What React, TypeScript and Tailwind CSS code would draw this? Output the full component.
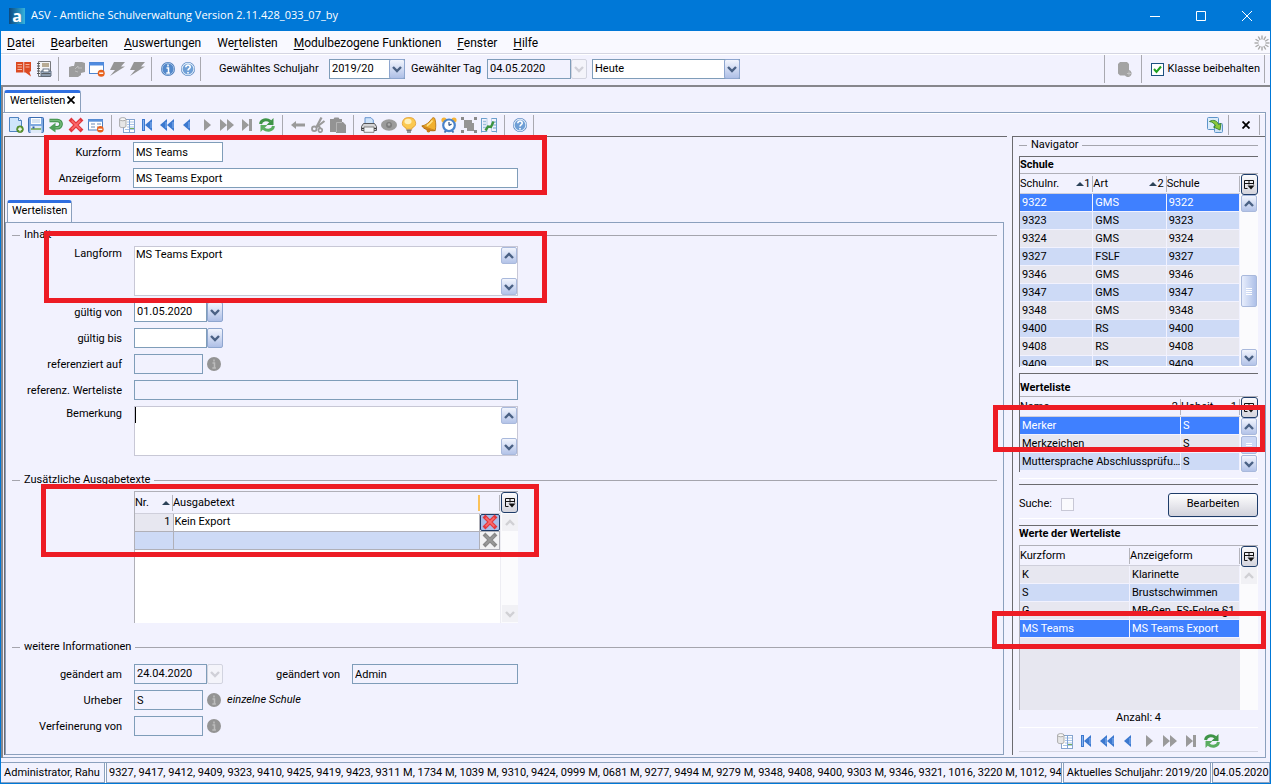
import React from "react";

/* ---------- icons ---------- */

type IconProps = { children: React.ReactNode; box?: string };

function Svg({ children, box = "0 0 16 16" }: IconProps) {
  return (
    <svg viewBox={box} className="block size-4 shrink-0" aria-hidden="true">
      {children}
    </svg>
  );
}

const BLUE = "#3b78cf";
const GREY = "#9a9a9a";

const NewIcon = () => (
  <Svg>
    <path d="M1.5.5h9l3 3v11h-12z" fill="#cfe5fb" stroke="#4f83bf" />
    <path d="M10.5.5v3h3" fill="#fff" stroke="#4f83bf" />
    <circle cx="12" cy="12.2" r="3.4" fill="#5f9a35" stroke="#3f7a20" strokeWidth=".6" />
    <path d="M12 10.2v4M10 12.2h4" stroke="#fff" strokeWidth="1.3" />
  </Svg>
);
const SaveIcon = () => (
  <Svg>
    <rect x=".5" y=".5" width="15" height="15" rx="1" fill="#7fa9e0" stroke="#3a6cb0" />
    <rect x="3" y="1" width="10" height="6" fill="#fff" />
    <path d="M4 3h8M4 5h8" stroke="#9fbbe0" strokeWidth=".8" />
    <rect x="2.5" y="9" width="11" height="7" fill="#dfeaf8" />
    <path d="M3 12h10" stroke="#76a84f" strokeWidth="1.6" />
    <rect x="4.5" y="9.5" width="2" height="2" fill="#2f5ea8" />
  </Svg>
);
const UndoIcon = () => (
  <Svg>
    <path d="M1.500 3.500h8a3.600 3.600 0 0 1 0 7.200H6" fill="none" stroke="#3e8f49" strokeWidth="3.600" />
    <path d="M2 3.500h7.500a3.600 3.600 0 0 1 0 7.200H6" fill="none" stroke="#74b97a" strokeWidth="1.600" />
    <path d="M7.500 5.800v9.600L1 10.700z" fill="#4f9f59" />
  </Svg>
);
const DeleteIcon = ({ grey = false }: { grey?: boolean }) => (
  <Svg>
    <path d="M3.400 3.400l9.200 9.200M12.600 3.400l-9.200 9.200" stroke={grey ? "#8a8a8a" : "#e2373d"} strokeWidth="4" strokeLinecap="square" />
    <path d="M3.600 3.600l8.800 8.800M12.400 3.600l-8.800 8.800" stroke={grey ? "#999" : "#fb6a6a"} strokeWidth="1.600" />
  </Svg>
);
const FormMinusIcon = () => (
  <Svg>
    <rect x=".5" y="2.500" width="14" height="10.500" fill="#fff" stroke="#4f7fbf" />
    <path d="M0 3.500h15" stroke="#5b92dc" strokeWidth="2.400" />
    <path d="M3 7h4M3 10h4M9 7h4M9 10h1" stroke="#6c8cb8" strokeWidth="1.200" />
    <circle cx="12.300" cy="12.300" r="3.300" fill="#e8601c" />
    <path d="M10.300 12.300h4" stroke="#fff" strokeWidth="1.300" />
  </Svg>
);
const WindowMinusIcon = () => (
  <Svg>
    <rect x=".5" y="1.500" width="14" height="11" fill="#fff" stroke="#4f86cf" />
    <path d="M0 3h15" stroke="#4f8be0" strokeWidth="3" />
    <circle cx="12.200" cy="12.200" r="3.500" fill="#e8601c" />
    <path d="M10.200 12.200h4" stroke="#fff" strokeWidth="1.400" />
  </Svg>
);
const TableIcon = () => (
  <Svg>
    <rect x="4.500" y="2.500" width="11" height="13" fill="#fff" stroke="#86a5cf" />
    <path d="M8 5h7M8 7.500h7M8 10h7M6 12.500h9" stroke="#a9c4e8" />
    <path d="M10.500 3v12" stroke="#7fa3d6" />
    <path d="M11 11.500h4" stroke="#74b05a" />
    <path d="M.600 2.200v7c0 1.900 6.400 1.900 6.400 0v-7z" fill="#e6e6e6" stroke="#9a9a9a" strokeWidth=".8" />
    <ellipse cx="3.800" cy="2.200" rx="3.200" ry="1.600" fill="#f8f8f8" stroke="#9a9a9a" strokeWidth=".8" />
  </Svg>
);
const FirstIcon = () => (
  <Svg>
    <path d="M3 2h3v12H3zM13 2v12L6 8z" fill={BLUE} />
    <path d="M4.500 3v10M12 5v6" stroke="#86b2f0" />
  </Svg>
);
const FastBackIcon = () => (
  <Svg>
    <path d="M8 2v12L1 8zM15 2v12L8 8z" fill={BLUE} />
    <path d="M7 5v6M14 5v6" stroke="#86b2f0" />
  </Svg>
);
const BackIcon = () => (
  <Svg>
    <path d="M11 2v12L4 8z" fill={BLUE} />
    <path d="M10 5v6" stroke="#86b2f0" />
  </Svg>
);
const NextIcon = () => (
  <Svg>
    <path d="M5 2v12l7-6z" fill={GREY} />
  </Svg>
);
const FastNextIcon = () => (
  <Svg>
    <path d="M1 2v12l7-6zM8 2v12l7-6z" fill={GREY} />
  </Svg>
);
const LastIcon = () => (
  <Svg>
    <path d="M3 2v12l7-6zM10 2h3v12h-3z" fill={GREY} />
  </Svg>
);
const RefreshIcon = () => (
  <Svg>
    <path d="M1.500 7c.8-4.500 6-5.500 10-2.600" fill="none" stroke="#3f9447" strokeWidth="3" />
    <path d="M14.500 1v7H7.500z" fill="#3f9447" />
    <path d="M14.500 9c-.8 4.500-6 5.500-10 2.600" fill="none" stroke="#5aad60" strokeWidth="3" />
    <path d="M1.500 15V8h7z" fill="#5aad60" />
  </Svg>
);
const ArrowLeftIcon = () => (
  <Svg>
    <path d="M1 8l5-4v2.400h9v3.200H6V12z" fill={GREY} />
  </Svg>
);
const ScissorsIcon = () => (
  <Svg>
    <path d="M11.500.500L6.500 10" stroke={GREY} strokeWidth="2.200" />
    <path d="M14.500 4L6 10.500M8.500 8.500l1.800 3" stroke={GREY} strokeWidth="2.200" />
    <circle cx="4.300" cy="11.800" r="2.300" fill="none" stroke={GREY} strokeWidth="1.800" />
    <circle cx="10.300" cy="13.300" r="1.900" fill="none" stroke={GREY} strokeWidth="1.700" />
  </Svg>
);
const PasteIcon = () => (
  <Svg>
    <path d="M0 2h3.500L4.500.500h4L9.500 2H12v3h1l3 3v8H6v-1H0z" fill="#939393" />
    <path d="M6.500 15V5.500H12" fill="none" stroke="#b4b4b4" />
  </Svg>
);
const PrintIcon = () => (
  <Svg>
    <path d="M4 7V.700h6L12.300 3v4" fill="#cfe4fb" stroke="#5a8bc8" strokeWidth=".9" />
    <path d="M2.500 6.500h11l2 3v4h-15v-4z" fill="#d4d4d6" stroke="#55565a" />
    <path d="M1 11.500h14" stroke="#333" strokeWidth="1.200" />
    <path d="M3 10h10v5.300H3z" fill="#f3f5f9" stroke="#666" strokeWidth=".8" />
  </Svg>
);
const EyeIcon = () => (
  <Svg>
    <ellipse cx="8" cy="8" rx="8" ry="5.800" fill="#9b9b9b" />
    <circle cx="8" cy="8" r="3" fill="#7d7d7d" />
    <circle cx="8" cy="7.500" r="1.300" fill="#b0b0b0" />
  </Svg>
);
const BulbIcon = () => (
  <Svg>
    <path d="M8 .600a6.200 5.400 0 0 1 3 10.300v1.300H5v-1.300A6.200 5.400 0 0 1 8 .600z" fill="#fbc951" stroke="#df9c2e" strokeWidth=".8" />
    <ellipse cx="7" cy="4.500" rx="3.500" ry="2.800" fill="#fff0ba" />
    <path d="M5.500 13.200h5M6 15h4" stroke="#777" strokeWidth="1.600" />
  </Svg>
);
const BellIcon = () => (
  <Svg>
    <path d="M11 1.500c1-1.500 3-.8 3 .8 1 4 1 7.500.2 11.300L1 9C5.500 8 8.500 5 11 1.500z" fill="#f1b02e" stroke="#b77614" strokeWidth=".9" />
    <path d="M.8 8.800c1 2.800 8 5.800 13.400 4.800" fill="#d7881b" stroke="#a96a10" strokeWidth=".9" />
    <circle cx="7.500" cy="13.600" r="1.900" fill="#c97b16" />
    <path d="M11.500 3.500c-1.500 2-3 4-5.500 5.200" stroke="#ffe48f" strokeWidth="1.500" fill="none" />
  </Svg>
);
const AlarmIcon = () => (
  <Svg>
    <circle cx="3" cy="3" r="2.600" fill="#f5b335" />
    <circle cx="13" cy="3" r="2.600" fill="#f5b335" />
    <path d="M3.500 15.500l2-2.500M12.500 15.500l-2-2.500" stroke="#4772ad" strokeWidth="1.800" />
    <circle cx="8" cy="8.300" r="5.800" fill="#fff" stroke="#4a83ca" strokeWidth="2.200" />
    <path d="M8 8.500V5M8 8.500l2.600-1.600" stroke="#2e5185" strokeWidth="1.200" />
  </Svg>
);
const GroupIcon = () => (
  <Svg>
    <path d="M3 3h8v3h2v8H6v-3H3z" fill="#949494" />
    <path d="M0 0h3v3H0zM13 0h3v3h-3zM0 13h3v3H0zM13 13h3v3h-3z" fill="#8a8a8a" />
  </Svg>
);
const CompareIcon = () => (
  <Svg>
    <path d="M.500 1v14.500M.500 1.500H6M15.500 1v14.500M10 1.500h6M1 14.500h5M11 14.500h5" fill="none" stroke="#6da0cc" />
    <path d="M2 4.500h3M2 7.500h3M2 10.500h3M12 5h3M12 8h3M12 11h3" stroke="#9cc0dc" strokeWidth="1.400" />
    <path d="M6 1v14M10.500 1v14" stroke="#a8c8e4" strokeWidth=".8" />
    <path d="M4.500 13.500l2.500-4 3 .5L12.500 4.500" stroke="#3c9440" strokeWidth="2.400" fill="none" />
  </Svg>
);
const RoundIcon = ({ sign, tone = "blue" }: { sign: "i" | "?"; tone?: "blue" | "grey" }) => (
  <Svg>
    <circle cx="8" cy="8" r="7" fill={tone === "blue" ? "#4678b8" : "#949494"} />
    {tone === "blue" && <circle cx="8" cy="8" r="5.900" fill={sign === "i" ? "#5288cb" : "#6f9fd6"} stroke="#dbe9f8" strokeWidth={sign === "?" ? 1.200 : 0.600} />}
    {sign === "i" ? (
      <path d="M8 3.500v2M6.500 7H8.500v4.500M6.300 12h3.600" stroke={tone === "blue" ? "#fff" : "#bcbcbc"} strokeWidth="1.500" fill="none" />
    ) : (
      <path d="M5.800 6.200c0-3 4.600-2.700 4.400 0C10.100 7.800 8 7.700 8 9.600M8 10.900v1.600" stroke="#fff" strokeWidth="1.600" fill="none" />
    )}
  </Svg>
);
const BookIcon = () => (
  <Svg>
    <path d="M0 1h7.400v10.500H0zM8.200 1H15v9l-1.500 1 1.500 4.500-5.500-4H8.200z" fill="#dc4a22" />
    <path d="M1.500 3.500h4.500M1.500 6h4.500M1.500 8.500h4.500M9.500 3.500h4M9.500 6h4" stroke="#f6b59f" />
  </Svg>
);
const ReportIcon = () => (
  <Svg>
    <path d="M2.500.500h12v15h-12z" fill="#f4f4f6" stroke="#77787c" />
    <path d="M1 2.500h3M1 5h3M1 7.500h3M1 10h3M1 12.500h3" stroke="#555" />
    <rect x="6" y="2" width="7" height="4" fill="#b8ab94" />
    <path d="M5 10h10v5H5z" fill="#b6c5d8" stroke="#475569" strokeWidth=".8" />
    <rect x="7" y="8" width="6" height="3" fill="#fff" stroke="#475569" strokeWidth=".8" />
    <path d="M5.500 12.800h9" stroke="#333" />
  </Svg>
);
const WindowsIcon = () => (
  <Svg>
    <path d="M6 1h7l3 1v9l-4 1v2l-3 2H0V6l3-1h2z" fill="#9d9d9d" />
    <path d="M6 8l3-3v2h4M9 11l-3-1" stroke="#bdbdbd" fill="none" />
  </Svg>
);
const BoltIcon = () => (
  <Svg>
    <path d="M5 1h11l-4 4.500h4L1 15l5-6H1z" fill="#959595" />
  </Svg>
);
const DbIcon = () => (
  <Svg>
    <path d="M1 3l2-2h7l2 2v6a3.600 3.600 0 1 1-4 5.500H3l-2-2z" fill="#a3a3a3" />
    <path d="M12 10.500v4M10 12.500h4" stroke="#c4c4c4" />
  </Svg>
);
const SwapIcon = () => (
  <Svg>
    <rect x=".5" y=".5" width="11" height="12" rx="1" fill="#dcecfb" stroke="#5e95c9" />
    <rect x="7.500" y="6.500" width="8" height="9" rx="1" fill="#cfe3f7" stroke="#5e95c9" />
    <path d="M2.500 4.500c4-2.500 8-.5 9 3l2.500-1-1 6.500-6.500-3 2-1c-1-2.500-3-4-6-4.500z" fill="#8ac83a" stroke="#36802a" strokeWidth=".9" />
  </Svg>
);
const SpinnerIcon = () => (
  <Svg>
    {[0, 30, 60, 90, 120, 150, 180, 210, 240, 270, 300, 330].map((a) => (
      <path key={a} d="M8 4.500V.500" stroke="#a8a8a8" strokeWidth="1.400" transform={`rotate(${a} 8 8)`} />
    ))}
  </Svg>
);
const Chevron = ({ up = false, color = "#4a6184" }: { up?: boolean; color?: string }) => (
  <svg viewBox="0 0 10 8" className="block h-2 w-2.5" aria-hidden="true">
    <path d={up ? "M1 6l4-4 4 4" : "M1 2l4 4 4-4"} fill="none" stroke={color} strokeWidth="2.400" />
  </svg>
);
const SortUp = () => (
  <svg viewBox="0 0 8 4" className="block h-1 w-2 shrink-0" aria-hidden="true">
    <path d="M4 0l4 4H0z" fill="#2c4258" />
  </svg>
);

/* ---------- small controls ---------- */

function ToolButton({ label, children }: { label: string; children: React.ReactNode }) {
  return (
    <button type="button" aria-label={label} className="flex size-5 shrink-0 items-center justify-center">
      {children}
    </button>
  );
}

const Sep = () => <span className="mx-[5px] h-5 w-px shrink-0 bg-[#a9a9b0]" />;

function ArrowButton({ label, up = false, disabled = false }: { label: string; up?: boolean; disabled?: boolean }) {
  return (
    <button
      type="button"
      aria-label={label}
      disabled={disabled}
      className={
        disabled
          ? "flex h-[17px] w-4 shrink-0 items-center justify-center bg-[#f1f1f5]"
          : "flex h-[17px] w-4 shrink-0 items-center justify-center rounded-[2px] border border-[#a9b9dc] bg-linear-to-b from-[#f2f5fd] to-[#b3c3e8]"
      }
    >
      <Chevron up={up} color={disabled ? "#d0d0d4" : "#4a6184"} />
    </button>
  );
}

function DropArrow({ disabled = false, label }: { disabled?: boolean; label: string }) {
  return (
    <button
      type="button"
      aria-label={label}
      disabled={disabled}
      className={
        disabled
          ? "flex w-4 shrink-0 items-center justify-center rounded-[2px] border border-[#d2d4e0] bg-[#f4f4fa]"
          : "flex w-4 shrink-0 items-center justify-center rounded-[2px] border border-[#8ea6cf] bg-linear-to-b from-[#f2f5fd] to-[#aebfe6]"
      }
    >
      <Chevron color={disabled ? "#d0d0d8" : "#4a6184"} />
    </button>
  );
}

function DateField({ id, value, disabled = false, label }: { id: string; value: string; disabled?: boolean; label: string }) {
  return (
    <div className="flex h-5">
      <input
        id={id}
        defaultValue={value}
        readOnly={disabled}
        className={
          disabled
            ? "w-[73px] border border-[#7f9db9] bg-[#f2f2fe] px-0.5 leading-4"
            : "w-[73px] border border-[#7f9db9] bg-white px-0.5 leading-4"
        }
      />
      <DropArrow disabled={disabled} label={label} />
    </div>
  );
}

function SelectField({ id, value, width }: { id: string; value: string; width: string }) {
  return (
    <div className={`relative flex h-5 shrink-0 ${width}`}>
      <select id={id} defaultValue={value} className="w-full appearance-none border border-[#7f9db9] bg-white px-0.5 leading-4">
        <option>{value}</option>
      </select>
      <span className="pointer-events-none absolute inset-y-0 right-0 flex w-4 items-center justify-center rounded-[2px] border border-[#8ea6cf] bg-linear-to-b from-[#f2f5fd] to-[#aebfe6]">
        <Chevron />
      </span>
    </div>
  );
}

function MemoField({ id, value, caret = false }: { id: string; value: string; caret?: boolean }) {
  return (
    <div className="relative flex h-[50px] w-96 border border-[#c8c8d6] bg-white">
      <textarea id={id} defaultValue={value} className="block h-12 flex-1 resize-none overflow-hidden px-px leading-4 outline-none" />
      {caret && <span className="absolute left-0 top-0 h-4 w-px bg-black" />}
      <div className="flex w-4 flex-col justify-between">
        <ArrowButton label="Nach oben" up />
        <ArrowButton label="Nach unten" />
      </div>
    </div>
  );
}

function Row({ id, label, tall = false, children }: { id: string; label: string; tall?: boolean; children: React.ReactNode }) {
  return (
    <div className={tall ? "flex items-start gap-3" : "flex items-center gap-3"}>
      <label
        htmlFor={id}
        className={
          tall
            ? "w-[110px] shrink-0 whitespace-nowrap text-right leading-4"
            : "w-[110px] shrink-0 whitespace-nowrap pt-0.5 text-right leading-4"
        }
      >
        {label}
      </label>
      {children}
    </div>
  );
}

function Legend({ text }: { text: string }) {
  return (
    <h2 className="flex h-4 items-center gap-1 font-normal leading-4">
      <span className="h-px w-2 bg-[#a5a5ad]" />
      {text}
      <span className="h-px flex-1 bg-[#a5a5ad]" />
    </h2>
  );
}

const ColumnButton = () => (
  <button
    type="button"
    aria-label="Spalten"
    className="flex h-[21px] w-[17px] shrink-0 items-center justify-center rounded-[3px] border border-[#1e3c69] bg-linear-to-b from-[#fbfbfd] to-[#d4d4dc]"
  >
    <svg viewBox="0 0 12 12" className="block size-3" aria-hidden="true">
      <path d="M4.500 9.500h-3v-8h9v4M1.500 4.500h9M6 1.500v4" fill="none" stroke="#111" />
      <path d="M4.500 6.500h7l-3.500 4z" fill="#111" />
    </svg>
  </button>
);

function Marker({ place }: { place: string }) {
  return <div aria-hidden="true" className={`pointer-events-none absolute z-10 border-[5px] border-[#ed1c24] ${place}`} />;
}

function Th({ children, sort, order }: { children?: React.ReactNode; sort?: boolean; order?: string }) {
  return (
    <th className="h-5 border-b border-[#cfcfdb] p-0 pt-px font-normal">
      <span className="flex h-4 items-center border-r border-[#b4b4bc] pr-0.5">
        <span className="flex-1 text-left">{children}</span>
        {sort && <SortUp />}
        {order}
      </span>
    </th>
  );
}

const stripe = (i: number, selected: boolean) =>
  selected ? "bg-[#3f80ff] text-white" : i % 2 ? "bg-[#cddaf6]" : "bg-[#e7e7f0]";

function Cells({ row, i, selected }: { row: string[]; i: number; selected: boolean }) {
  return (
    <tr className={stripe(i, selected)}>
      {row.map((c, k) => (
        <td key={k} className="h-[18px] whitespace-nowrap border-b border-r border-[#f2f2fe] py-0 pl-0.5 pr-0 leading-4">
          {c}
        </td>
      ))}
    </tr>
  );
}

/* ---------- data ---------- */

const MENU = [
  ["", "D", "atei"],
  ["", "B", "earbeiten"],
  ["", "A", "uswertungen"],
  ["We", "r", "telisten"],
  ["", "M", "odulbezogene Funktionen"],
  ["", "F", "enster"],
  ["", "H", "ilfe"],
];

const SCHOOLS = [
  ["9322", "GMS", "9322"],
  ["9323", "GMS", "9323"],
  ["9324", "GMS", "9324"],
  ["9327", "FSLF", "9327"],
  ["9346", "GMS", "9346"],
  ["9347", "GMS", "9347"],
  ["9348", "GMS", "9348"],
  ["9400", "RS", "9400"],
  ["9408", "RS", "9408"],
  ["9409", "RS", "9409"],
];

const LISTS = [
  ["Merker", "S"],
  ["Merkzeichen", "S"],
  ["Muttersprache Abschlussprüfu…", "S"],
];

const VALUES = [
  ["K", "Klarinette"],
  ["S", "Brustschwimmen"],
  ["G", "MB-Gen. FS-Folge §1"],
  ["MS Teams", "MS Teams Export"],
];

/* ---------- page regions ---------- */

function TitleBar() {
  return (
    <header className="flex h-[31px] items-center bg-[#0078d7] pl-2 font-['Open_Sans','Noto_Sans',sans-serif] text-white">
      <span className="flex size-4 items-center justify-center bg-linear-to-r from-[#0c4a80] to-[#35b3de] text-base font-bold leading-4">a</span>
      <h1 className="ml-1.5 flex-1 font-normal">ASV - Amtliche Schulverwaltung Version 2.11.428_033_07_by</h1>
      {[
        ["Minimieren", "M1 6.500h10"],
        ["Maximieren", "M1.500 1.500h9v9h-9z"],
        ["Schließen", "M1 1l10 10M11 1L1 11"],
      ].map(([name, d]) => (
        <button key={name} type="button" aria-label={name} className="flex h-[30px] w-[46px] items-center justify-center">
          <svg viewBox="0 0 12 12" className="size-3" aria-hidden="true">
            <path d={d} fill="none" stroke="#fff" />
          </svg>
        </button>
      ))}
    </header>
  );
}

function MenuBar() {
  return (
    <nav className="flex h-[23px] items-center gap-4 border-b border-[#d5d6e2] bg-[#f9f9ff] pl-1.5 pt-0.5 text-xs">
      {MENU.map(([a, b, c]) => (
        <a key={b + c} href="#" className="whitespace-nowrap">
          {a}
          <span className="underline underline-offset-2">{b}</span>
          {c}
        </a>
      ))}
      <span className="ml-auto">
        <SpinnerIcon />
      </span>
    </nav>
  );
}

function GlobalToolbar() {
  return (
    <div className="flex h-[31px] items-center border-t border-white pb-0.5">
      <div className="ml-[13px] flex items-center">
        <ToolButton label="Hilfebuch"><BookIcon /></ToolButton>
        <ToolButton label="Bericht"><ReportIcon /></ToolButton>
      </div>
      <span className="ml-1 mr-2 h-6 w-px shrink-0 bg-[#a9a9b0]" />
      <ToolButton label="Fenster"><WindowsIcon /></ToolButton>
      <ToolButton label="Fenster schließen"><WindowMinusIcon /></ToolButton>
      <ToolButton label="Aktion"><BoltIcon /></ToolButton>
      <ToolButton label="Aktion 2"><BoltIcon /></ToolButton>
      <span className="ml-1 mr-1.5 h-6 w-px shrink-0 bg-[#a9a9b0]" />
      <ToolButton label="Info"><RoundIcon sign="i" /></ToolButton>
      <ToolButton label="Hilfe"><RoundIcon sign="?" /></ToolButton>
      <span className="mx-0.5 h-6 w-px shrink-0 bg-[#a9a9b0]" />
      <label htmlFor="jahr" className="ml-4 w-[110px] shrink-0 whitespace-nowrap">Gewähltes Schuljahr</label>
      <SelectField id="jahr" value="2019/20" width="w-[76px]" />
      <label htmlFor="tag" className="ml-1.5 w-[76px] shrink-0 whitespace-nowrap">Gewählter Tag</label>
      <div className="flex h-5 shrink-0">
        <input id="tag" defaultValue="04.05.2020" readOnly className="w-[84px] border border-[#7f9db9] bg-[#f2f2fe] px-0.5" />
        <DropArrow disabled label="Kalender" />
      </div>
      <span className="w-[5px] shrink-0" />
      <SelectField id="heute" value="Heute" width="w-[148px]" />
      <span className="flex-1" />
      <span className="h-7 w-px shrink-0 bg-[#a9a9b0]" />
      <span className="flex w-9 shrink-0 justify-center pl-1"><DbIcon /></span>
      <span className="h-7 w-px shrink-0 bg-[#a9a9b0]" />
      <label className="ml-[9px] flex shrink-0 items-center gap-1 whitespace-nowrap">
        <span className="relative flex">
          <input type="checkbox" defaultChecked className="peer block size-[13px] appearance-none border border-[#1c5180] bg-white" />
          <svg viewBox="0 0 13 13" className="pointer-events-none absolute inset-0 size-[13px] opacity-0 peer-checked:opacity-100" aria-hidden="true">
            <path d="M3 6l2.500 3L10 3.500" fill="none" stroke="#21a121" strokeWidth="2" />
          </svg>
        </span>
        Klasse beibehalten
      </label>
      <span className="ml-1 mr-[5px] h-7 w-px shrink-0 bg-[#a9a9b0]" />
    </div>
  );
}

function ModuleToolbar() {
  return (
    <div className="flex h-[23px] items-center border-t border-white pl-[3px]">
      <ToolButton label="Neu"><NewIcon /></ToolButton>
      <ToolButton label="Speichern"><SaveIcon /></ToolButton>
      <ToolButton label="Rückgängig"><UndoIcon /></ToolButton>
      <ToolButton label="Löschen"><DeleteIcon /></ToolButton>
      <ToolButton label="Formular schließen"><FormMinusIcon /></ToolButton>
      <Sep />
      <ToolButton label="Liste"><TableIcon /></ToolButton>
      <ToolButton label="Erster"><FirstIcon /></ToolButton>
      <ToolButton label="Zurück schnell"><FastBackIcon /></ToolButton>
      <ToolButton label="Zurück"><BackIcon /></ToolButton>
      <ToolButton label="Weiter"><NextIcon /></ToolButton>
      <ToolButton label="Weiter schnell"><FastNextIcon /></ToolButton>
      <ToolButton label="Letzter"><LastIcon /></ToolButton>
      <ToolButton label="Aktualisieren"><RefreshIcon /></ToolButton>
      <Sep />
      <ToolButton label="Pfeil"><ArrowLeftIcon /></ToolButton>
      <ToolButton label="Ausschneiden"><ScissorsIcon /></ToolButton>
      <ToolButton label="Einfügen"><PasteIcon /></ToolButton>
      <Sep />
      <ToolButton label="Drucken"><PrintIcon /></ToolButton>
      <ToolButton label="Ansicht"><EyeIcon /></ToolButton>
      <ToolButton label="Hinweis"><BulbIcon /></ToolButton>
      <ToolButton label="Erinnerung"><BellIcon /></ToolButton>
      <ToolButton label="Termin"><AlarmIcon /></ToolButton>
      <ToolButton label="Gruppieren"><GroupIcon /></ToolButton>
      <ToolButton label="Vergleichen"><CompareIcon /></ToolButton>
      <Sep />
      <ToolButton label="Modulhilfe"><RoundIcon sign="?" /></ToolButton>
      <span className="ml-[3px] h-5 w-px bg-[#a9a9b0]" />
      <span className="flex-1" />
      <ToolButton label="Wechseln"><SwapIcon /></ToolButton>
      <span className="ml-[3px] h-5 w-px bg-[#a9a9b0]" />
      <button type="button" aria-label="Modul schließen" className="flex w-[30px] justify-center pl-1">
        <svg viewBox="0 0 8 8" className="size-2" aria-hidden="true">
          <path d="M.500.500l7 7M7.500.500l-7 7" stroke="#000" strokeWidth="1.800" />
        </svg>
      </button>
      <span className="mr-[5px] h-5 w-px bg-[#a9a9b0]" />
    </div>
  );
}

function TextTable() {
  return (
    <div className="ml-[122px] flex h-[132px] w-96 border-l border-t border-[#b0b0b8] bg-white">
      <div className="min-w-0 flex-1">
        <table className="w-full table-fixed border-collapse">
          <colgroup>
            <col className="w-[38px]" />
            <col />
            <col className="w-5" />
          </colgroup>
          <thead className="bg-[#f2f2fe]">
            <tr>
              <Th sort>Nr.</Th>
              <th className="h-[21px] border-b border-[#cfcfdb] p-0 pt-px font-normal">
                <span className="flex h-4 items-center border-r-2 border-[#fbc25a]">Ausgabetext</span>
              </th>
              <Th />
            </tr>
          </thead>
          <tbody>
            <tr>
              <td className="h-[18px] border-b border-r border-[#b0b0b8] bg-[#e7e7f0] p-0 pr-0.5 text-right leading-4">1</td>
              <td className="border-b border-r border-[#b0b0b8] px-px py-0 leading-4">Kein Export</td>
              <td className="border-b border-[#b0b0b8] p-0">
                <button type="button" aria-label="Zeile löschen" className="flex h-[17px] w-5 items-center justify-center rounded-[2px] border border-[#1e3c69] bg-[#a9bde8]">
                  <DeleteIcon />
                </button>
              </td>
            </tr>
            <tr className="bg-[#cddaf6]">
              <td className="h-[18px] border-b border-r border-[#b0b0b8] p-0" />
              <td className="border-b border-r border-[#b0b0b8] p-0" />
              <td className="border-b border-r border-[#b0b0b8] bg-[#f2f2f4] p-0">
                <button type="button" aria-label="Leere Zeile löschen" disabled className="flex h-[17px] w-full items-center justify-center">
                  <DeleteIcon grey />
                </button>
              </td>
            </tr>
          </tbody>
        </table>
      </div>
      <div className="flex w-[18px] flex-col items-center border-l border-[#ededf3] bg-[#fbfbfd]">
        <ColumnButton />
        <div className="flex flex-1 flex-col justify-between py-px">
          <ArrowButton label="Nach oben" up disabled />
          <ArrowButton label="Nach unten" disabled />
        </div>
      </div>
    </div>
  );
}

function InfoField({ id, value }: { id: string; value: string }) {
  return (
    <div className="flex items-center gap-[3px]">
      <input id={id} defaultValue={value} readOnly className="h-5 w-[69px] border border-[#7f9db9] bg-[#f2f2fe] px-0.5 leading-4" />
      <button type="button" aria-label="Information"><RoundIcon sign="i" tone="grey" /></button>
    </div>
  );
}

function Editor() {
  return (
    <main className="flex min-w-0 flex-1 flex-col border-l border-t border-[#6b6b6f]">
      <section className="relative flex h-[62px] flex-col gap-1.5 pl-1.5 pt-[5px]">
        <Row id="kurz" label="Kurzform">
          <input id="kurz" defaultValue="MS Teams" className="h-5 w-[90px] border border-[#7f9db9] bg-white px-0.5 leading-4" />
        </Row>
        <Row id="anzeige" label="Anzeigeform">
          <input id="anzeige" defaultValue="MS Teams Export" className="h-5 w-[385px] border border-[#7f9db9] bg-white px-0.5 leading-4" />
        </Row>
        <Marker place="-top-0.5 left-[39px] h-[60px] w-[503px]" />
      </section>

      <div className="flex h-[23px] items-end pl-0.5">
        <button type="button" className="h-[22px] rounded-t-[3px] border border-b-0 border-t-[3px] border-[#8ba0bd] border-t-[#2f6ee0] bg-linear-to-b from-white to-[#f6f6ff] px-1 pb-1 leading-4">
          Wertelisten
        </button>
      </div>

      <div className="mr-[3px] flex flex-1 flex-col border border-[#8ba0bd] px-1.5 pt-1">
        <section className="relative">
          <Legend text="Inhalt" />
          <div className="flex flex-col gap-1.5 pt-[3px]">
            <Row id="lang" label="Langform" tall><MemoField id="lang" value="MS Teams Export" /></Row>
            <Row id="von" label="gültig von"><DateField id="von" value="01.05.2020" label="Datum wählen" /></Row>
            <Row id="bis" label="gültig bis"><DateField id="bis" value="" label="Datum wählen" /></Row>
            <Row id="ref" label="referenziert auf"><InfoField id="ref" value="" /></Row>
            <Row id="refw" label="referenz. Werteliste">
              <input id="refw" readOnly className="h-5 w-96 border border-[#7f9db9] bg-[#f2f2fe] px-0.5" />
            </Row>
            <Row id="bem" label="Bemerkung" tall><MemoField id="bem" value="" caret /></Row>
          </div>
          <Marker place="left-8 top-1 h-[72px] w-[503px]" />
        </section>

        <section className="relative mt-4">
          <Legend text="Zusätzliche Ausgabetexte" />
          <div className="pt-[3px]"><TextTable /></div>
          <Marker place="left-[29px] top-3 h-[73px] w-[498px]" />
        </section>

        <section className="mt-4">
          <Legend text="weitere Informationen" />
          <div className="flex flex-col gap-1.5 pt-[9px]">
            <div className="flex gap-[7px]">
              <Row id="am" label="geändert am"><DateField id="am" value="24.04.2020" disabled label="Datum" /></Row>
              <Row id="gvon" label="geändert von">
                <input id="gvon" defaultValue="Admin" readOnly className="h-5 w-[166px] border border-[#7f9db9] bg-[#f2f2fe] px-0.5 leading-4" />
              </Row>
            </div>
            <div className="flex items-center gap-[5px]">
              <Row id="urh" label="Urheber"><InfoField id="urh" value="S" /></Row>
              <span className="italic">einzelne Schule</span>
            </div>
            <Row id="verf" label="Verfeinerung von"><InfoField id="verf" value="" /></Row>
          </div>
        </section>
      </div>
    </main>
  );
}

function Navigator() {
  return (
    <aside className="ml-[5px] flex w-[253px] shrink-0 flex-col border-l border-t border-[#6b6b6f] pl-1.5 pr-[7px]">
      <Legend text="Navigator" />

      <section className="mt-[3px] border-l border-t border-[#6b6b6f]">
        <h3 className="h-4 font-bold leading-4">Schule</h3>
        <div className="flex h-[194px] border-b border-t border-b-white border-t-[#b0b0b8]">
          <div className="min-w-0 flex-1 overflow-hidden">
            <table className="w-full table-fixed border-separate border-spacing-0">
              <thead>
                <tr>
                  <Th sort order="1">Schulnr.</Th>
                  <Th sort order="2">Art</Th>
                  <Th>Schule</Th>
                </tr>
              </thead>
              <tbody>{SCHOOLS.map((r, i) => <Cells key={r[0]} row={r} i={i} selected={i === 0} />)}</tbody>
            </table>
          </div>
          <div className="flex w-[18px] flex-col items-center bg-[#fbfbfd]">
            <ColumnButton />
            <div className="flex flex-1 flex-col items-center">
              <ArrowButton label="Nach oben" up />
              <span className="grow-3" />
              <span className="flex h-8 w-4 flex-col items-center justify-center gap-px rounded-[2px] border border-[#a9b9dc] bg-linear-to-r from-[#e8eefc] to-[#aec0e8]">
                {[0, 1, 2, 3].map((n) => <i key={n} className="h-px w-1.5 bg-white" />)}
              </span>
              <span className="grow-2" />
              <ArrowButton label="Nach unten" />
            </div>
          </div>
        </div>
      </section>

      <section className="relative mt-1.5 border-l border-t border-[#6b6b6f]">
        <h3 className="h-[22px] pt-1.5 font-bold leading-4">Werteliste</h3>
        <div className="flex h-[76px] border-t border-[#b0b0b8]">
          <div className="min-w-0 flex-1 overflow-hidden">
            <table className="w-full table-fixed border-separate border-spacing-0">
              <colgroup>
                <col />
                <col className="w-[59px]" />
              </colgroup>
              <thead>
                <tr>
                  <Th order="2">Name</Th>
                  <Th order="1">Hoheit</Th>
                </tr>
              </thead>
              <tbody>{LISTS.map((r, i) => <Cells key={r[0]} row={r} i={i === 1 ? 0 : 1} selected={i === 0} />)}</tbody>
            </table>
          </div>
          <div className="flex w-[18px] flex-col items-center bg-[#fbfbfd]">
            <ColumnButton />
            <ArrowButton label="Nach oben" up />
            <span className="my-px flex w-4 flex-1 flex-col items-center justify-center gap-px rounded-[2px] border border-[#a9b9dc] bg-[#ccd8f4]">
              {[0, 1, 2].map((n) => <i key={n} className="h-px w-1.5 bg-white" />)}
            </span>
            <ArrowButton label="Nach unten" />
          </div>
        </div>
        <Marker place="-left-[27px] top-[31px] h-[47px] w-[272px]" />
      </section>

      <section className="mt-1.5 border-t border-white pt-[5px]">
        <div className="flex h-[35px] items-center border-b border-t border-b-white border-t-[#6b6b6f] pt-1.5">
          <label htmlFor="suche" className="w-[42px]">Suche:</label>
          <input id="suche" type="checkbox" className="size-[13px] appearance-none border border-[#c8c8d6] bg-[#fafafd]" />
          <button type="button" className="ml-auto h-6 w-[90px] rounded-[3px] border border-[#1e3c69] bg-linear-to-b from-white to-[#d2d2dc]">
            Bearbeiten
          </button>
        </div>
      </section>

      <section className="relative mt-1.5 border-t border-[#6b6b6f]">
        <h3 className="h-[19px] font-bold leading-4">Werte der Werteliste</h3>
        <div className="flex h-[165px] border-l border-t border-[#b0b0b8] bg-[#e7e7f0]">
          <div className="min-w-0 flex-1 overflow-hidden">
            <table className="w-full table-fixed border-separate border-spacing-0">
              <thead className="bg-[#f2f2fe]">
                <tr>
                  <Th>Kurzform</Th>
                  <Th>Anzeigeform</Th>
                </tr>
              </thead>
              <tbody>{VALUES.map((r, i) => <Cells key={r[0]} row={r} i={i} selected={i === 3} />)}</tbody>
            </table>
          </div>
          <div className="flex w-[18px] flex-col items-center bg-[#fbfbfd]">
            <ColumnButton />
            <ArrowButton label="Nach oben" up disabled />
          </div>
        </div>
        <p className="h-[18px] border-b border-white text-center leading-4">Anzahl: 4</p>
        <Marker place="-left-[27px] top-[85px] h-[38px] w-[274px]" />
      </section>

      <div className="flex h-6 items-center justify-center gap-px border-b border-[#d5d6e2] pt-0.5">
        <ToolButton label="Liste"><TableIcon /></ToolButton>
        <ToolButton label="Erster"><FirstIcon /></ToolButton>
        <ToolButton label="Zurück schnell"><FastBackIcon /></ToolButton>
        <ToolButton label="Zurück"><BackIcon /></ToolButton>
        <ToolButton label="Weiter"><NextIcon /></ToolButton>
        <ToolButton label="Weiter schnell"><FastNextIcon /></ToolButton>
        <ToolButton label="Letzter"><LastIcon /></ToolButton>
        <ToolButton label="Aktualisieren"><RefreshIcon /></ToolButton>
      </div>
    </aside>
  );
}

function StatusBar() {
  return (
    <footer className="mt-1 flex h-[21px] shrink-0 gap-px border-t border-[#8ba0bd] bg-white leading-[19px]">
      <span className="w-[104px] shrink-0 overflow-hidden whitespace-nowrap border-b border-r border-[#8ba0bd] bg-[#f2f2fe] pl-[3px]">Administrator, Rahu</span>
      <span className="min-w-0 flex-1 overflow-hidden whitespace-nowrap border border-t-0 border-[#8ba0bd] bg-[#f2f2fe] px-0.5">
        9327, 9417, 9412, 9409, 9323, 9410, 9425, 9419, 9423, 9311 M, 1734 M, 1039 M, 9310, 9424, 0999 M, 0681 M, 9277, 9494 M, 9279 M, 9348, 9408, 9400, 9303 M, 9346, 9321, 1016, 3220 M, 1012, 9418
      </span>
      <span className="w-[148px] shrink-0 whitespace-nowrap border border-t-0 border-[#8ba0bd] bg-[#f2f2fe] text-center">Aktuelles Schuljahr: 2019/20</span>
      <span className="w-[58px] shrink-0 whitespace-nowrap border border-t-0 border-[#8ba0bd] bg-[#f2f2fe] text-center">04.05.2020</span>
    </footer>
  );
}

export default function App() {
  return (
    <div className="flex min-h-screen flex-col border border-t-0 border-[#0078d7] bg-[#f2f2fe] font-['Roboto','Noto_Sans',sans-serif] text-[11px] text-black">
      <TitleBar />
      <MenuBar />
      <GlobalToolbar />
      <div className="flex flex-1 flex-col border-l-2 border-t-2 border-[#87878c] pr-1">
        <div className="flex h-[25px] items-end pl-px">
          <button type="button" className="flex h-[22px] items-center gap-0.5 rounded-t-[3px] border border-b-0 border-t-[3px] border-[#8ba0bd] border-t-[#2f6ee0] bg-white px-[5px] pb-1 leading-4">
            Wertelisten
            <svg viewBox="0 0 8 8" className="mb-0.5 size-2" aria-hidden="true">
              <path d="M.500.500l7 7M7.500.500l-7 7" stroke="#000" strokeWidth="1.800" />
            </svg>
          </button>
        </div>
        <div className="flex flex-1 flex-col border border-l-0 border-[#8ba0bd]">
          <ModuleToolbar />
          <div className="flex flex-1 pb-0.5 pl-px">
            <Editor />
            <Navigator />
          </div>
        </div>
      </div>
      <StatusBar />
    </div>
  );
}
